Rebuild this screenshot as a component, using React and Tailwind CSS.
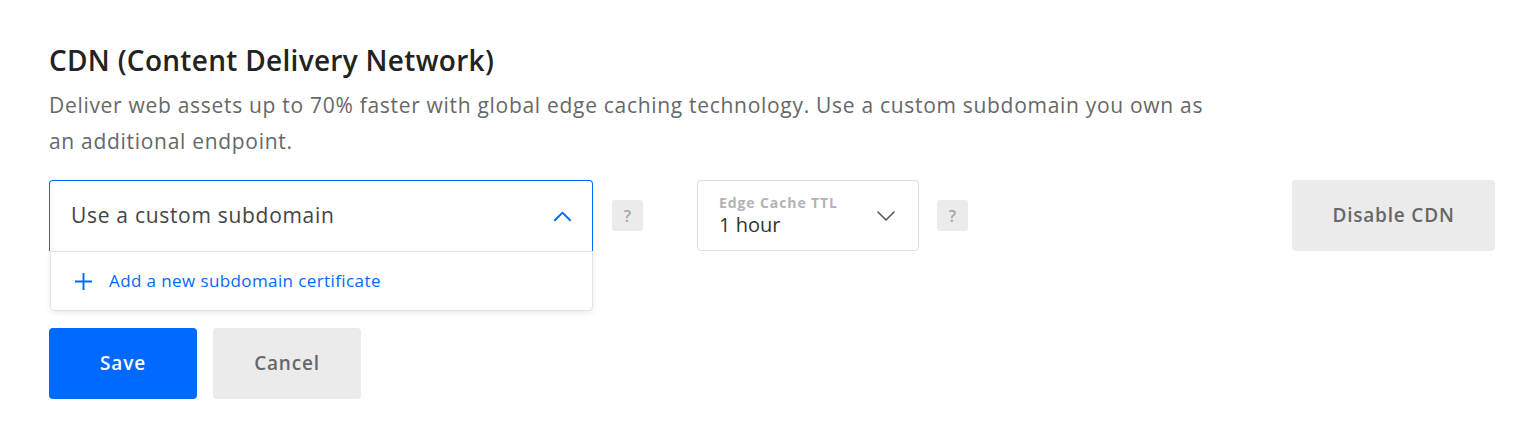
function ChevronUp({ className }) {
  return (
    <svg className={className} viewBox="0 0 20 12" fill="none" stroke="currentColor" strokeWidth="2" strokeLinecap="round" strokeLinejoin="round">
      <path d="M2 10.5 10 2.5l8 8" />
    </svg>
  )
}

function ChevronDown({ className }) {
  return (
    <svg className={className} viewBox="0 0 20 12" fill="none" stroke="currentColor" strokeWidth="1.6" strokeLinecap="round" strokeLinejoin="round">
      <path d="M2 2l8 8 8-8" />
    </svg>
  )
}

function HelpButton() {
  return (
    <button className="w-[31px] h-[31px] rounded-[3px] bg-[#ebebeb] text-[#a6a6a6] text-[16px] font-semibold flex items-center justify-center">
      ?
    </button>
  )
}

export default function App() {
  return (
    <div className="w-[1540px] h-[431px] bg-white font-['Open_Sans',sans-serif] pl-[49px] pt-[42px]">
      <h2 className="text-[28px] leading-[36px] font-semibold text-[#222] tracking-[0.3px]">
        CDN (Content Delivery Network)
      </h2>
      <p className="mt-[9px] w-[1176px] text-[21px] leading-[36px] text-[#676767] tracking-[0.7px]">
        Deliver web assets up to 70% faster with global edge caching technology. Use a custom subdomain you own as an additional endpoint.
      </p>

      {/* Controls row */}
      <div className="mt-[21px] flex items-start w-[1446px]">
        <div className="relative w-[544px] h-[71px]">
          <div className="h-full border border-[#0069ff] border-b-0 rounded-t-[4px] flex items-center justify-between pl-[21px] pr-[20px]">
            <span className="text-[21px] text-[#444] tracking-[0.7px]">Use a custom subdomain</span>
            <ChevronUp className="w-[19px] h-[12px] text-[#0069ff]" />
          </div>
          {/* Dropdown menu */}
          <div className="absolute left-[1px] right-0 top-full h-[60px] bg-white border border-[#e2e2e2] rounded-b-[4px] shadow-[0_2px_6px_rgba(0,0,0,0.08)] flex items-center pl-[23px] gap-[16px]">
            <svg className="w-[19px] h-[19px] text-[#0069ff]" viewBox="0 0 20 20" fill="none" stroke="currentColor" strokeWidth="2">
              <path d="M10 1v18M1 10h18" />
            </svg>
            <span className="text-[17px] text-[#0069ff] tracking-[0.4px]">Add a new subdomain certificate</span>
          </div>
        </div>
        <div className="ml-[19px] mt-[20px]">
          <HelpButton />
        </div>

        <div className="ml-[54px] w-[222px] h-[71px] border border-[#dcdcdc] rounded-[4px] flex items-center justify-between pl-[21px] pr-[22px]">
          <div className="flex flex-col">
            <span className="text-[14px] leading-[18px] font-bold text-[#b3b3b3] tracking-[0.9px]">Edge Cache TTL</span>
            <span className="text-[20px] leading-[26px] text-[#333]">1 hour</span>
          </div>
          <ChevronDown className="w-[20px] h-[12px] text-[#555]" />
        </div>
        <div className="ml-[18px] mt-[20px]">
          <HelpButton />
        </div>

        <button className="ml-auto w-[203px] h-[71px] rounded-[4px] bg-[#ebebeb] text-[19px] font-semibold text-[#676767] tracking-[0.8px]">
          Disable CDN
        </button>
      </div>

      {/* Actions */}
      <div className="mt-[77px] flex gap-[16px]">
        <button className="w-[148px] h-[71px] rounded-[4px] bg-[#0069ff] text-white text-[19px] font-semibold tracking-[0.8px]">
          Save
        </button>
        <button className="w-[148px] h-[71px] rounded-[4px] bg-[#ebebeb] text-[#676767] text-[19px] font-semibold tracking-[0.8px]">
          Cancel
        </button>
      </div>
    </div>
  )
}
